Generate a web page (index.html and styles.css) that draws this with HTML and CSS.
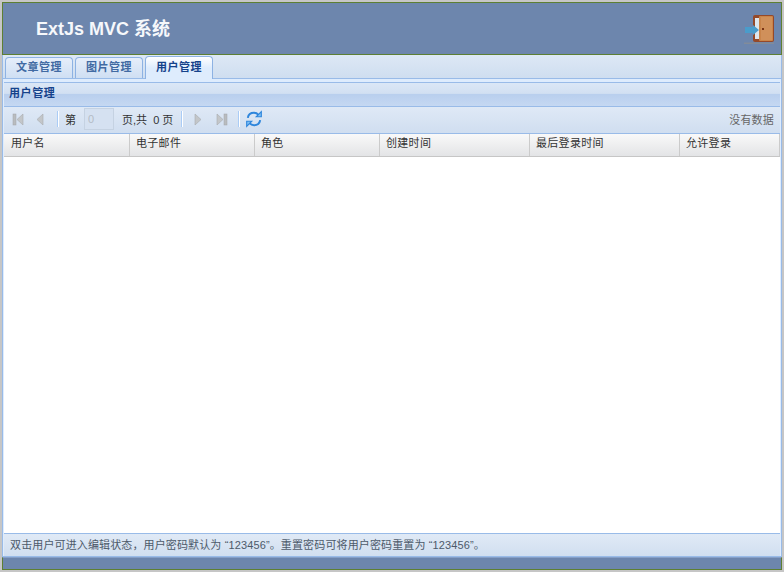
FILE: index.html
```html
<!DOCTYPE html>
<html lang="zh">
<head>
<meta charset="utf-8">
<title>ExtJs MVC 系统</title>
<link rel="stylesheet" href="styles.css">
</head>
<body>
<div class="app">
  <header class="banner">
    <h1 class="brand">ExtJs MVC 系统</h1>
    <svg class="door" width="32" height="32" viewBox="0 0 32 32">
      <rect x="0" y="29.500" width="30" height="1.500" fill="#8c8f92" opacity=".7"/>
      <rect x="9" y="2" width="21" height="27" rx="2" fill="#94492a"/>
      <rect x="11" y="5" width="4" height="21" fill="#dfe6ec"/>
      <rect x="15" y="3" width="14" height="25" rx="1" fill="#c9844a"/>
      <rect x="17" y="4" width="11" height="23" fill="#d0905a"/>
      <rect x="18" y="15" width="2" height="2" fill="#7a3414"/>
      <path d="M1 14h8v-2l6 5-6 5v-2H1z" fill="#4a9ccb"/>
    </svg>
  </header>
  <nav class="tabs">
    <a class="tab">文章管理</a>
    <a class="tab">图片管理</a>
    <a class="tab active">用户管理</a>
  </nav>
  <main class="panel">
    <div class="panel-title">用户管理</div>
    <div class="toolbar">
      <svg class="ico" width="16" height="16" viewBox="0 0 16 16"><rect x="3" y="3" width="3" height="11" fill="#b9bcbf" stroke="#a2a5a8" stroke-width=".5"/><path d="M13 3v11L7 8.500z" fill="#c3c6c9" stroke="#a8abae" stroke-width=".6"/></svg>
      <svg class="ico prev" width="16" height="16" viewBox="0 0 16 16"><path d="M11 3v11L5 8.500z" fill="#c3c6c9" stroke="#a8abae" stroke-width=".6"/></svg>
      <span class="sep"></span>
      <span class="tb-text">第</span>
      <input class="page" value="0" disabled>
      <span class="tb-text">页,共&nbsp;&nbsp;0 页</span>
      <span class="sep tight"></span>
      <svg class="ico next" width="16" height="16" viewBox="0 0 16 16"><path d="M5 3v11l6-5.500z" fill="#c3c6c9" stroke="#a8abae" stroke-width=".6"/></svg>
      <svg class="ico last" width="16" height="16" viewBox="0 0 16 16"><path d="M3 3v11l6-5.500z" fill="#c3c6c9" stroke="#a8abae" stroke-width=".6"/><rect x="10" y="3" width="3" height="11" fill="#b9bcbf" stroke="#a2a5a8" stroke-width=".5"/></svg>
      <span class="sep tight"></span>
      <svg class="ico refresh" width="18" height="18" viewBox="0 0 16 16" fill="none" stroke="#2f86dc" stroke-width="1.800"><path d="M2.500 7C3 4 5.500 2.500 8 2.500c1.800 0 3 .7 4 1.800"/><path d="M13.500 9c-.5 3-3 4.500-5.500 4.500-1.800 0-3-.7-4-1.800"/><path d="M14.500 1.500v4.500H10z" fill="#7fc0f5" stroke-width="1"/><path d="M1.500 14.500V10H6z" fill="#7fc0f5" stroke-width="1"/></svg>
      <span class="tb-status">没有数据</span>
    </div>
    <div class="grid-head">
      <div class="col c1">用户名</div>
      <div class="col c1">电子邮件</div>
      <div class="col c1">角色</div>
      <div class="col c2">创建时间</div>
      <div class="col c2">最后登录时间</div>
      <div class="col c3">允许登录</div>
    </div>
    <div class="grid-body"></div>
    <div class="hint">双击用户可进入编辑状态，用户密码默认为 “123456”。重置密码可将用户密码重置为 “123456”。</div>
  </main>
  <footer class="foot"></footer>
</div>
</body>
</html>
```
FILE: styles.css
```css
* { box-sizing: border-box; }
html, body { margin: 0; height: 100%; }
body {
  background: #c6c6c6;
  font-family: "Liberation Sans", "Noto Sans CJK SC", sans-serif;
  font-size: 11px;
  overflow: hidden;
}
.app {
  display: flex;
  flex-direction: column;
  height: 572px;
  padding: 2px;
  background: #c6c6c6;
}
.banner {
  height: 53px;
  flex: none;
  display: flex;
  align-items: center;
  justify-content: space-between;
  padding: 0 5px 3px 33px;
  background: #6d86ad;
  border: 1px solid #5d7f33;
}
.brand {
  margin: 0;
  color: #f6f8fb;
  font-size: 18px;
  font-weight: bold;
}
.door { margin-top: 3px; }
.tabs {
  height: 24px;
  flex: none;
  display: flex;
  gap: 2px;
  align-items: flex-end;
  padding-left: 2px;
  background: linear-gradient(#dde8f5, #cfdef0);
  border-left: 1px solid #99bbe8;
  border-right: 1px solid #99bbe8;
  border-bottom: 1px solid #99bbe8;
}
.tab {
  width: 68px;
  height: 21px;
  text-align: center;
  line-height: 19px;
  font-weight: bold;
  font-size: 11px;
  letter-spacing: .5px;
  color: #416aa3;
  background: linear-gradient(#e6eefa, #cfdff3);
  border: 1px solid #8db2e3;
  border-bottom: none;
  border-radius: 4px 4px 0 0;
}
.tab.active {
  height: 23px;
  margin-bottom: -1px;
  line-height: 20px;
  color: #15428b;
  background: linear-gradient(#ffffff, #deecfd 50%);
}
.panel {
  flex: 1;
  min-height: 0;
  display: flex;
  flex-direction: column;
  background: #deecfd;
  border: solid #99bbe8;
  border-width: 0 1px 1px;
  padding: 3px 1px 0;
}
.panel-title {
  height: 25px;
  flex: none;
  padding: 3px 5px 0;
  line-height: 14px;
  font-weight: bold;
  font-size: 11px;
  letter-spacing: .6px;
  color: #15428b;
  background: linear-gradient(#dbe7f6 0%, #d2e0f2 45%, #b9cfee 50%, #c5d8f2 100%);
  border-bottom: 1px solid #99bbe8;
  border-top: 1px solid #99bbe8;
}
.toolbar {
  height: 27px;
  flex: none;
  display: flex;
  align-items: center;
  padding: 0 6px 2px;
  background: linear-gradient(#dfe9f6, #d0def0);
  border-bottom: 1px solid #99bbe8;
  color: #444;
}
.ico { flex: none; }
.ico.prev { margin-left: 6px; }
.ico.next { margin-left: 3px; }
.ico.last { margin-left: 8px; }
.ico.refresh { margin-left: 1px; }
.sep { width: 1px; height: 16px; background: #aaccf6; border-right: 1px solid #fff; margin: 0 4px 0 9px; flex: none; box-sizing: content-box; }
.sep.tight { margin-left: 8px; }
.sep + .tb-text { margin-left: 2px; }
.tb-text { color: #333; white-space: nowrap; }
.page {
  width: 30px;
  height: 22px;
  margin: 0 8px;
  padding: 0 3px;
  font: 11px "Liberation Sans", sans-serif;
  color: #b4bcc6;
  background: #d5e1f1;
  border: 1px solid #c5d2e2;
}
.tb-status { margin-left: auto; color: #666; letter-spacing: .2px; }
.grid-head {
  height: 23px;
  flex: none;
  display: flex;
  padding-left: 1px;
  background: linear-gradient(#f9f9f9, #e3e4e6);
  border-bottom: 1px solid #c6c6c6;
}
.col {
  flex: none;
  padding: 0 6px;
  line-height: 19px;
  color: #333;
  letter-spacing: .3px;
  border-right: 1px solid #cbcbcb;
}
.c1 { width: 125px; }
.c2 { width: 150px; }
.c3 { width: 100px; }
.grid-body { flex: 1; background: #fff; }
.hint {
  height: 23px;
  flex: none;
  padding: 0 6px;
  line-height: 22px;
  color: #4d5a6a;
  letter-spacing: .13px;
  white-space: nowrap;
  background: linear-gradient(#e0eaf6, #d1dff0);
  border-top: 1px solid #99bbe8;
}
.foot {
  height: 13px;
  flex: none;
  background: #6d86ad;
  border: 1px solid #5d7f33;
  border-top-color: #86a0c8;
}
```
